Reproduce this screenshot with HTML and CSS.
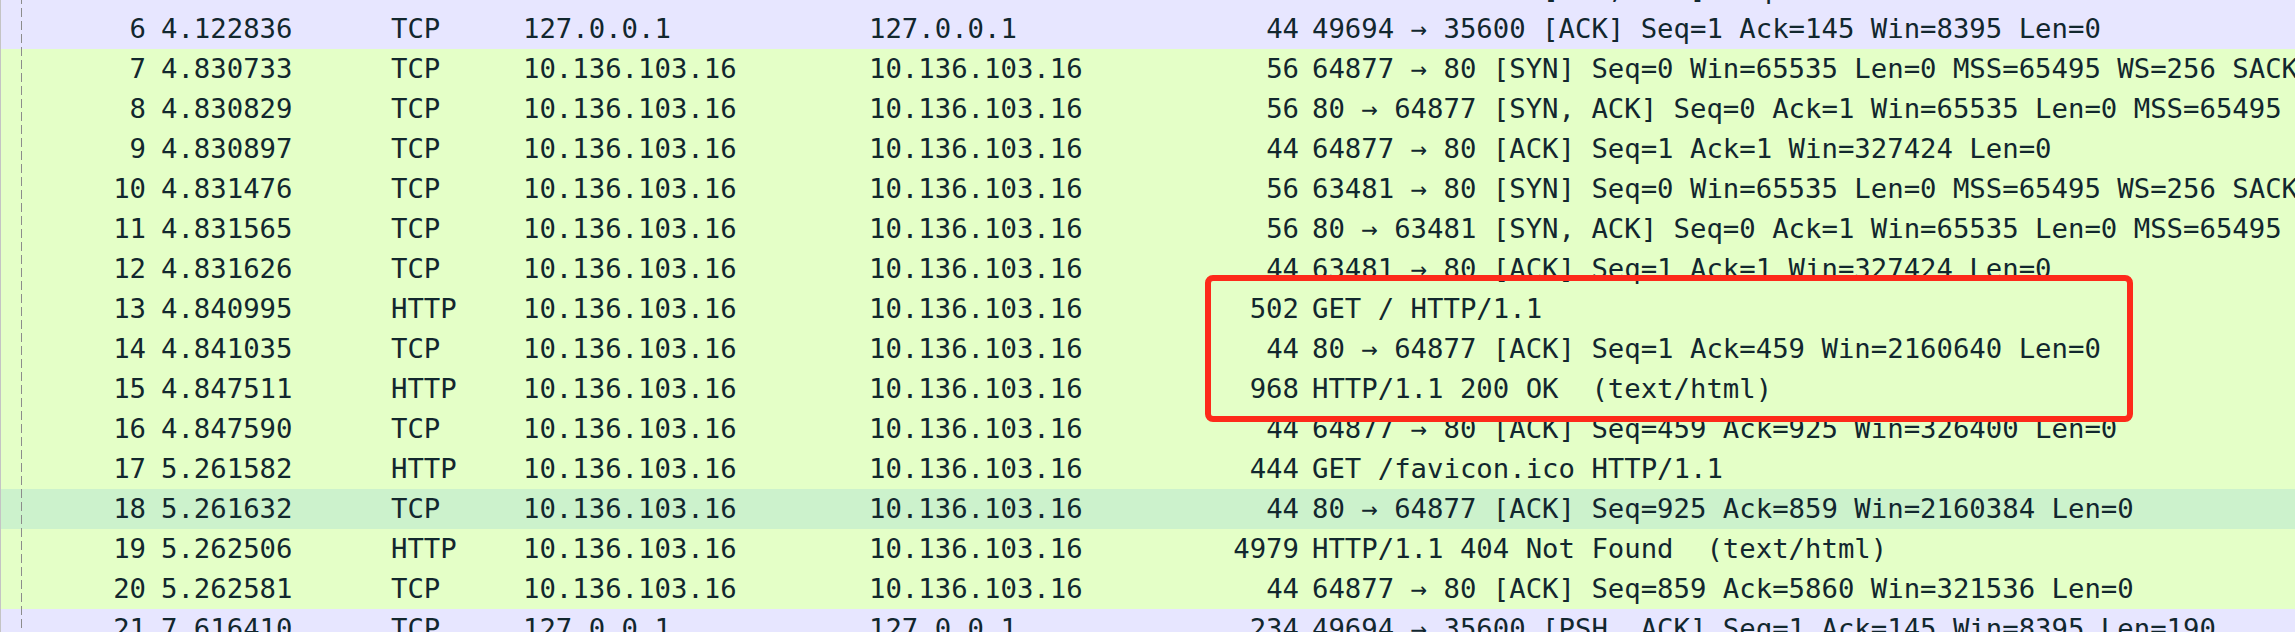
FILE: index.html
```html
<!DOCTYPE html>
<html>
<head>
<meta charset="utf-8">
<link rel="stylesheet" href="styles.css">
</head>
<body>
<div class="packets">
  <div class="row tcp"><span class="c no">5</span><span class="c time">4.122711</span><span class="c proto">TCP</span><span class="c src">127.0.0.1</span><span class="c dst">127.0.0.1</span><span class="c len">188</span><span class="c info">35600 → 49694 [PSH, ACK] Seq=1 Ack=1 Win=8442 Len=144</span></div>
  <div class="row tcp"><span class="c no">6</span><span class="c time">4.122836</span><span class="c proto">TCP</span><span class="c src">127.0.0.1</span><span class="c dst">127.0.0.1</span><span class="c len">44</span><span class="c info">49694 → 35600 [ACK] Seq=1 Ack=145 Win=8395 Len=0</span></div>
  <div class="row http"><span class="c no">7</span><span class="c time">4.830733</span><span class="c proto">TCP</span><span class="c src">10.136.103.16</span><span class="c dst">10.136.103.16</span><span class="c len">56</span><span class="c info">64877 → 80 [SYN] Seq=0 Win=65535 Len=0 MSS=65495 WS=256 SACK_PERM</span></div>
  <div class="row http"><span class="c no">8</span><span class="c time">4.830829</span><span class="c proto">TCP</span><span class="c src">10.136.103.16</span><span class="c dst">10.136.103.16</span><span class="c len">56</span><span class="c info">80 → 64877 [SYN, ACK] Seq=0 Ack=1 Win=65535 Len=0 MSS=65495 WS=256 SACK_PERM</span></div>
  <div class="row http"><span class="c no">9</span><span class="c time">4.830897</span><span class="c proto">TCP</span><span class="c src">10.136.103.16</span><span class="c dst">10.136.103.16</span><span class="c len">44</span><span class="c info">64877 → 80 [ACK] Seq=1 Ack=1 Win=327424 Len=0</span></div>
  <div class="row http"><span class="c no">10</span><span class="c time">4.831476</span><span class="c proto">TCP</span><span class="c src">10.136.103.16</span><span class="c dst">10.136.103.16</span><span class="c len">56</span><span class="c info">63481 → 80 [SYN] Seq=0 Win=65535 Len=0 MSS=65495 WS=256 SACK_PERM</span></div>
  <div class="row http"><span class="c no">11</span><span class="c time">4.831565</span><span class="c proto">TCP</span><span class="c src">10.136.103.16</span><span class="c dst">10.136.103.16</span><span class="c len">56</span><span class="c info">80 → 63481 [SYN, ACK] Seq=0 Ack=1 Win=65535 Len=0 MSS=65495 WS=256 SACK_PERM</span></div>
  <div class="row http"><span class="c no">12</span><span class="c time">4.831626</span><span class="c proto">TCP</span><span class="c src">10.136.103.16</span><span class="c dst">10.136.103.16</span><span class="c len">44</span><span class="c info">63481 → 80 [ACK] Seq=1 Ack=1 Win=327424 Len=0</span></div>
  <div class="row http"><span class="c no">13</span><span class="c time">4.840995</span><span class="c proto">HTTP</span><span class="c src">10.136.103.16</span><span class="c dst">10.136.103.16</span><span class="c len">502</span><span class="c info">GET / HTTP/1.1</span></div>
  <div class="row http"><span class="c no">14</span><span class="c time">4.841035</span><span class="c proto">TCP</span><span class="c src">10.136.103.16</span><span class="c dst">10.136.103.16</span><span class="c len">44</span><span class="c info">80 → 64877 [ACK] Seq=1 Ack=459 Win=2160640 Len=0</span></div>
  <div class="row http"><span class="c no">15</span><span class="c time">4.847511</span><span class="c proto">HTTP</span><span class="c src">10.136.103.16</span><span class="c dst">10.136.103.16</span><span class="c len">968</span><span class="c info">HTTP/1.1 200 OK  (text/html)</span></div>
  <div class="row http"><span class="c no">16</span><span class="c time">4.847590</span><span class="c proto">TCP</span><span class="c src">10.136.103.16</span><span class="c dst">10.136.103.16</span><span class="c len">44</span><span class="c info">64877 → 80 [ACK] Seq=459 Ack=925 Win=326400 Len=0</span></div>
  <div class="row http"><span class="c no">17</span><span class="c time">5.261582</span><span class="c proto">HTTP</span><span class="c src">10.136.103.16</span><span class="c dst">10.136.103.16</span><span class="c len">444</span><span class="c info">GET /favicon.ico HTTP/1.1</span></div>
  <div class="row hover"><span class="c no">18</span><span class="c time">5.261632</span><span class="c proto">TCP</span><span class="c src">10.136.103.16</span><span class="c dst">10.136.103.16</span><span class="c len">44</span><span class="c info">80 → 64877 [ACK] Seq=925 Ack=859 Win=2160384 Len=0</span></div>
  <div class="row http"><span class="c no">19</span><span class="c time">5.262506</span><span class="c proto">HTTP</span><span class="c src">10.136.103.16</span><span class="c dst">10.136.103.16</span><span class="c len">4979</span><span class="c info">HTTP/1.1 404 Not Found  (text/html)</span></div>
  <div class="row http"><span class="c no">20</span><span class="c time">5.262581</span><span class="c proto">TCP</span><span class="c src">10.136.103.16</span><span class="c dst">10.136.103.16</span><span class="c len">44</span><span class="c info">64877 → 80 [ACK] Seq=859 Ack=5860 Win=321536 Len=0</span></div>
  <div class="row tcp"><span class="c no">21</span><span class="c time">7.616410</span><span class="c proto">TCP</span><span class="c src">127.0.0.1</span><span class="c dst">127.0.0.1</span><span class="c len">234</span><span class="c info">49694 → 35600 [PSH, ACK] Seq=1 Ack=145 Win=8395 Len=190</span></div>
  <div class="mark"></div>
</div>
</body>
</html>
```
FILE: styles.css
```css
html, body {
  margin: 0;
  padding: 0;
  background: #ffffff;
  overflow: hidden;
}

.packets {
  position: relative;
  margin-top: -31px;
  border-left: 1px solid #c4c4c4;
  font-family: "DejaVu Sans Mono", monospace;
  font-size: 27.3px;
  color: #12272e;
}

.packets::before {
  content: "";
  position: absolute;
  left: 20px;
  top: 0;
  bottom: 0;
  width: 1px;
  background: repeating-linear-gradient(to bottom, #8c8c8c 0 9px, transparent 9px 13px);
  z-index: 2;
}

.row {
  display: grid;
  grid-template-columns: 152px 230px 132px 346px 345px 100px 1fr;
  height: 40px;
  line-height: 40px;
  white-space: pre;
}

.row.tcp { background: #e7e6ff; }
.row.http { background: #e4ffc7; }
.row.hover { background: #ccf2cc; }

.c {
  overflow: hidden;
  padding-left: 8px;
}

.c.no, .c.len {
  text-align: right;
  padding-left: 0;
  padding-right: 7px;
}

.c.info {
  padding-left: 6px;
}

.mark {
  position: absolute;
  left: 1204px;
  top: 306px;
  width: 916px;
  height: 135px;
  border: 6px solid #fd2a1a;
  border-radius: 8px;
  z-index: 3;
}
```
